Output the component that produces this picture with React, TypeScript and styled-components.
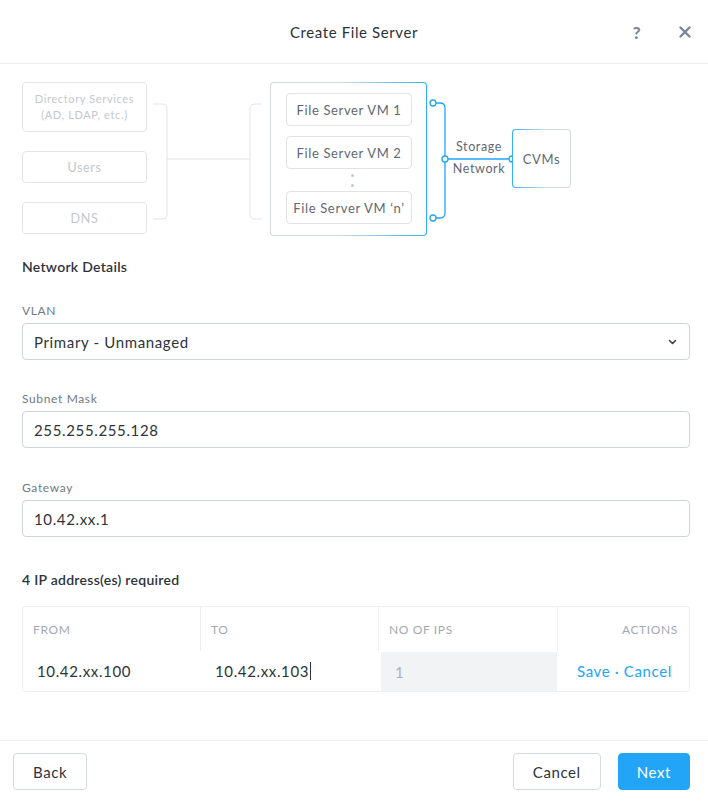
import React from "react";
import styled, { createGlobalStyle } from "styled-components";

const GlobalStyle = createGlobalStyle`
  html, body { margin: 0; padding: 0; background: #fff; }
  body { font-family: Lato, "Open Sans", "Liberation Sans", sans-serif; color: #2d333b; letter-spacing: 0.04em; }
  * { box-sizing: border-box; }
`;

const BLUE = "#22a5f7";

const Modal = styled.div`
  width: 708px;
  height: 802px;
  display: flex;
  flex-direction: column;
  background: #fff;
`;

const Header = styled.header`
  height: 64px;
  flex: none;
  display: flex;
  align-items: center;
  justify-content: center;
  position: relative;
  border-bottom: 1px solid #eef0f2;
`;

const Title = styled.h1`
  margin: 0;
  font-size: 15px;
  font-weight: 400;
  color: #2b3139;
  letter-spacing: 0.04em;
`;

const HeaderIcons = styled.div`
  position: absolute;
  right: 14px;
  top: 0;
  height: 64px;
  display: flex;
  align-items: center;
  gap: 30px;
`;

const IconButton = styled.span`
  width: 18px;
  display: flex;
  justify-content: center;
  color: #7a8798;
  font-size: 17px;
  font-weight: 900;
`;

const Diagram = styled.div`
  position: relative;
  height: 160px;
  margin-top: 14px;
  flex: none;
`;

const Lines = styled.svg`
  position: absolute;
  left: 0;
  top: 0;
`;

const Node = styled.div<{ $l: number; $t: number; $w: number; $h: number }>`
  position: absolute;
  left: ${(p) => p.$l}px;
  top: ${(p) => p.$t}px;
  width: ${(p) => p.$w}px;
  height: ${(p) => p.$h}px;
  display: flex;
  align-items: center;
  justify-content: center;
  text-align: center;
`;

const GhostBox = styled(Node)`
  border: 1px solid #e3e6e9;
  border-radius: 4px;
  color: #c3c8ce;
  font-size: 12.5px;
  line-height: 17px;
`;

const SmallGhost = styled(GhostBox)`
  font-size: 11px;
  line-height: 16px;
`;

const GradientBox = styled(Node)<{ $dir: string }>`
  border: 1px solid transparent;
  border-radius: 4px;
  background: linear-gradient(#fff, #fff) padding-box,
    linear-gradient(${(p) => p.$dir}, #d3d8dd 45%, #2fb0f3) border-box;
`;

const VmBox = styled(Node)`
  border: 1px solid #dfe3e7;
  border-radius: 4px;
  color: #5f6873;
  font-size: 13px;
`;

const Dots = styled(Node)`
  flex-direction: column;
  gap: 7px;
  &::before, &::after {
    content: "";
    width: 3px;
    height: 3px;
    border-radius: 50%;
    background: #c3c8ce;
  }
`;

const Caption = styled(Node)`
  color: #5f6873;
  font-size: 12.5px;
  line-height: 22px;
  flex-direction: column;
`;

const CvmText = styled.span`
  color: #5f6873;
  font-size: 13px;
`;

const Form = styled.div`
  padding: 0 18px 0 22px;
  display: flex;
  flex-direction: column;
`;

const SectionTitle = styled.div<{ $mt: number }>`
  margin-top: ${(p) => p.$mt}px;
  font-size: 14px;
  line-height: 18px;
  font-weight: 600;
  color: #2d333b;
  letter-spacing: 0.02em;
`;

const Label = styled.label<{ $mt: number }>`
  display: block;
  margin-top: ${(p) => p.$mt}px;
  font-size: 12px;
  line-height: 16px;
  color: #6f7985;
  margin-bottom: 4px;
`;

const InputBox = styled.div`
  height: 37px;
  border: 1px solid #cfd4da;
  border-radius: 4px;
  display: flex;
  align-items: center;
  justify-content: space-between;
  padding: 0 12px 0 11px;
  font-size: 15px;
  color: #2d333b;
`;

const Table = styled.div`
  margin-top: 17px;
  border: 1px solid #eceef1;
  border-radius: 3px;
  display: grid;
  grid-template-columns: 178px 178px 179px 1fr;
`;

const Th = styled.div<{ $right?: boolean; $last?: boolean }>`
  height: 44px;
  display: flex;
  align-items: center;
  justify-content: ${(p) => (p.$right ? "flex-end" : "flex-start")};
  padding: 0 11px 0 10px;
  font-size: 12px;
  color: #a1a9b4;
  border-right: ${(p) => (p.$last ? "none" : "1px solid #eceef1")};
`;

const Td = styled.div<{ $muted?: boolean; $right?: boolean }>`
  height: 39px;
  display: flex;
  align-items: center;
  justify-content: ${(p) => (p.$right ? "flex-end" : "flex-start")};
  padding: 0 ${(p) => (p.$right ? "17px" : "14px")};
  font-size: 15px;
  color: ${(p) => (p.$muted ? "#aab1ba" : "#2d333b")};
  background: ${(p) => (p.$muted ? "#f2f3f5" : "#fff")};
  margin: ${(p) => (p.$muted ? "1px 1px 0 2px" : "0")};
`;

const Caret = styled.span`
  display: inline-block;
  width: 1px;
  height: 18px;
  background: #2d333b;
  margin-left: 1px;
`;

const LinkText = styled.span`
  color: ${BLUE};
  font-size: 15px;
`;

const Footer = styled.footer`
  margin-top: auto;
  height: 62px;
  border-top: 1px solid #eef0f2;
  display: flex;
  align-items: center;
  padding: 0 18px 0 13px;
  gap: 17px;
`;

const Button = styled.button<{ $primary?: boolean }>`
  height: 37px;
  padding: 0 ${(p) => (p.$primary ? "18px" : "19px")};
  border-radius: 4px;
  border: 1px solid ${(p) => (p.$primary ? BLUE : "#d5dae0")};
  background: ${(p) => (p.$primary ? BLUE : "#fff")};
  color: ${(p) => (p.$primary ? "#fff" : "#2d333b")};
  font-family: inherit;
  font-size: 15px;
  letter-spacing: 0.04em;
`;

const Spacer = styled.div`
  flex: 1;
`;

export default function App() {
  const gray = "#dfe3e7";
  return (
    <>
      <GlobalStyle />
      <Modal>
        <Header>
          <Title>Create File Server</Title>
          <HeaderIcons>
            <IconButton>?</IconButton>
            <IconButton>
              <svg width="12" height="12" viewBox="0 0 12 12">
                <path d="M1.5 1.5 L10.5 10.5 M10.5 1.5 L1.5 10.5" stroke="#7a8798" strokeWidth="2.4" strokeLinecap="round" />
              </svg>
            </IconButton>
          </HeaderIcons>
        </Header>

        <Diagram>
          <Lines width="708" height="160" viewBox="0 0 708 160">
            <path d="M153 26 H162 Q167 26 167 31 V136 Q167 141 162 141 H153" fill="none" stroke={gray} strokeWidth="1" />
            <path d="M167 81 H250" fill="none" stroke={gray} strokeWidth="1" />
            <path d="M262 26 H255 Q250 26 250 31 V136 Q250 141 255 141 H262" fill="none" stroke={gray} strokeWidth="1" />
            <path d="M436 25 H440 Q445 25 445 30 V135 Q445 140 440 140 H436" fill="none" stroke={BLUE} strokeWidth="1.3" />
            <path d="M448 81 H509" fill="none" stroke={BLUE} strokeWidth="1.3" />
            <circle cx="433" cy="25" r="3" fill="#fff" stroke={BLUE} strokeWidth="1.3" />
            <circle cx="433" cy="140" r="3" fill="#fff" stroke={BLUE} strokeWidth="1.3" />
            <circle cx="445" cy="81" r="3" fill="#fff" stroke={BLUE} strokeWidth="1.3" />
            <circle cx="512" cy="81" r="3" fill="#fff" stroke={BLUE} strokeWidth="1.3" />
          </Lines>

          <SmallGhost $l={22} $t={4} $w={125} $h={50}>
            Directory Services
            <br />
            (AD, LDAP, etc.)
          </SmallGhost>
          <GhostBox $l={22} $t={73} $w={125} $h={32}>Users</GhostBox>
          <GhostBox $l={22} $t={124} $w={125} $h={32}>DNS</GhostBox>

          <GradientBox $dir="90deg" $l={270} $t={4} $w={157} $h={154} />
          <VmBox $l={286} $t={15} $w={126} $h={33}>File Server VM 1</VmBox>
          <VmBox $l={286} $t={58} $w={126} $h={33}>File Server VM 2</VmBox>
          <Dots $l={342} $t={94} $w={20} $h={16} />
          <VmBox $l={286} $t={113} $w={126} $h={33}>File Server VM ‘n’</VmBox>

          <Caption $l={449} $t={58} $w={60} $h={44}>
            <span>Storage</span>
            <span>Network</span>
          </Caption>

          <GradientBox $dir="270deg" $l={512} $t={51} $w={59} $h={59}>
            <CvmText>CVMs</CvmText>
          </GradientBox>
        </Diagram>

        <Form>
          <SectionTitle $mt={20}>Network Details</SectionTitle>

          <Label $mt={27}>VLAN</Label>
          <InputBox>
            <span>Primary - Unmanaged</span>
            <svg width="9" height="6" viewBox="0 0 9 6">
              <path d="M1.5 1.5 L4.5 4.5 L7.5 1.5" fill="none" stroke="#3a414a" strokeWidth="1.6" strokeLinecap="round" strokeLinejoin="round" />
            </svg>
          </InputBox>

          <Label $mt={31}>Subnet Mask</Label>
          <InputBox>255.255.255.128</InputBox>

          <Label $mt={32}>Gateway</Label>
          <InputBox>10.42.xx.1</InputBox>

          <SectionTitle $mt={34}>4 IP address(es) required</SectionTitle>

          <Table>
            <Th>FROM</Th>
            <Th>TO</Th>
            <Th>NO OF IPS</Th>
            <Th $right $last>ACTIONS</Th>
            <Td>10.42.xx.100</Td>
            <Td>
              10.42.xx.103
              <Caret />
            </Td>
            <Td $muted>1</Td>
            <Td $right>
              <LinkText>Save · Cancel</LinkText>
            </Td>
          </Table>
        </Form>

        <Footer>
          <Button>Back</Button>
          <Spacer />
          <Button>Cancel</Button>
          <Button $primary>Next</Button>
        </Footer>
      </Modal>
    </>
  );
}
